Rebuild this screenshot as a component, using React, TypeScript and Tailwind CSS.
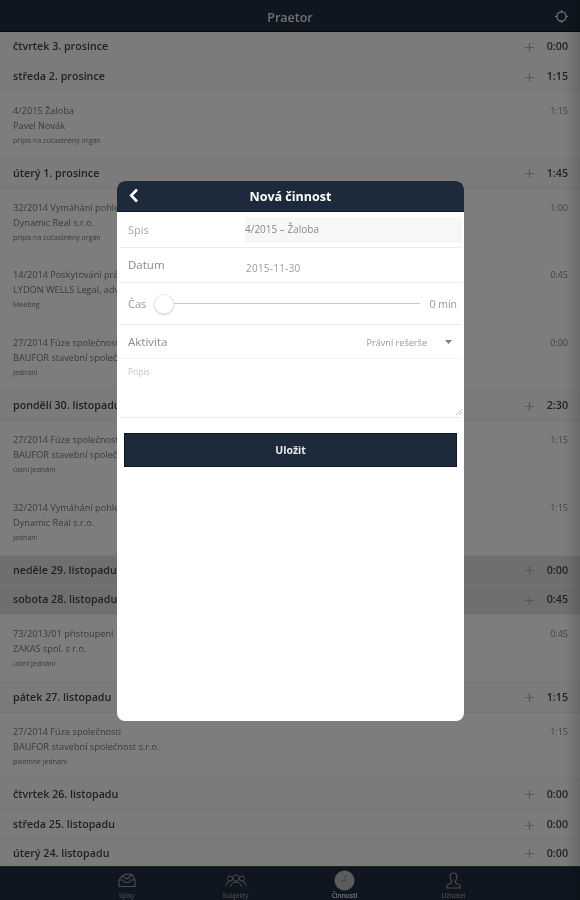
import React from "react";

type Entry = { title: string; client: string; note: string; time: string; h: string };
type Item =
  | { kind: "day"; label: string; time: string; h: string; tone?: string }
  | ({ kind: "entry" } & Entry);

const items: Item[] = [
  { kind: "day", label: "čtvrtek 3. prosince", time: "0:00", h: "h-[30px]" },
  { kind: "day", label: "středa 2. prosince", time: "1:15", h: "h-[30px]" },
  { kind: "entry", title: "4/2015 Žaloba", client: "Pavel Novák", note: "přípis na zúčastněný orgán", time: "1:15", h: "h-[66px]" },
  { kind: "day", label: "úterý 1. prosince", time: "1:45", h: "h-[31px]" },
  { kind: "entry", title: "32/2014 Vymáhání pohledávky", client: "Dynamic Real s.r.o.", note: "přípis na zúčastněný orgán", time: "1:00", h: "h-[67px]" },
  { kind: "entry", title: "14/2014 Poskytování právních služeb", client: "LYDON WELLS Legal, advokátní", note: "Meeting", time: "0:45", h: "h-[68px]" },
  { kind: "entry", title: "27/2014 Fúze společnosti", client: "BAUFOR stavební společnost s.r.o.", note: "Jednání", time: "0:00", h: "h-[67px]" },
  { kind: "day", label: "pondělí 30. listopadu", time: "2:30", h: "h-[30px]" },
  { kind: "entry", title: "27/2014 Fúze společnosti", client: "BAUFOR stavební společnost s.r.o.", note: "ústní jednání", time: "1:15", h: "h-[68px]" },
  { kind: "entry", title: "32/2014 Vymáhání pohledávky", client: "Dynamic Real s.r.o.", note: "Jednání", time: "1:15", h: "h-[67px]" },
  { kind: "day", label: "neděle 29. listopadu", time: "0:00", h: "h-[29px]", tone: "bg-[#dedede]" },
  { kind: "day", label: "sobota 28. listopadu", time: "0:45", h: "h-[30px]", tone: "bg-[#dedede]" },
  { kind: "entry", title: "73/2013/01 přistoupení", client: "ZAKAS spol. s r.o.", note: "ústní jednání", time: "0:45", h: "h-[67px]" },
  { kind: "day", label: "pátek 27. listopadu", time: "1:15", h: "h-[31px]" },
  { kind: "entry", title: "27/2014 Fúze společnosti", client: "BAUFOR stavební společnost s.r.o.", note: "písemné jednání", time: "1:15", h: "h-[66px]" },
  { kind: "day", label: "čtvrtek 26. listopadu", time: "0:00", h: "h-[31px]" },
  { kind: "day", label: "středa 25. listopadu", time: "0:00", h: "h-[30px]" },
  { kind: "day", label: "úterý 24. listopadu", time: "0:00", h: "h-[27px]" },
];

function Plus() {
  return (
    <svg width="9" height="9" viewBox="0 0 9 9" className="mt-[2px] shrink-0">
      <path d="M4.500 0v9M0 4.500h9" stroke="#b0b0b0" strokeWidth="1.2" />
    </svg>
  );
}

function Day({ label, time, h, tone }: { label: string; time: string; h: string; tone?: string }) {
  return (
    <div className={`${h} ${tone ?? "bg-[#f6f6f6]"} flex items-center border-b border-[#ebebeb] pb-[1px] pl-[13px] pr-[12px]`}>
      <span className="flex-1 text-[10.7px] leading-[14px] font-semibold text-[#444]">{label}</span>
      <Plus />
      <span className="ml-[13px] text-right text-[10.7px] leading-[14px] font-semibold text-[#444]">{time}</span>
    </div>
  );
}

function EntryRow({ title, client, note, time, h }: Entry) {
  return (
    <div className={`${h} bg-[#fafafa] flex border-b border-[#f0f0f0] pl-[13px] pr-[12px] pt-[11px]`}>
      <div className="flex-1 flex flex-col">
        <span className="text-[9.2px] leading-[15px] text-[#777]">{title}</span>
        <span className="text-[9.2px] leading-[15px] text-[#777]">{client}</span>
        <span className="text-[7px] leading-[15px] text-[#777]">{note}</span>
      </div>
      <span className="text-[9px] leading-[15px] text-[#888]">{time}</span>
    </div>
  );
}

function Field({ label, h, children, labelClass = "" }: { label: string; h: string; children: React.ReactNode; labelClass?: string }) {
  return (
    <div className={`${h} mx-[2px] flex items-center border-b border-[#ececec] pl-[9px]`}>
      <span className={`w-[117px] shrink-0 leading-[14px] ${labelClass}`}>{label}</span>
      {children}
    </div>
  );
}

function IconInbox() {
  return (
    <svg width="18" height="15" viewBox="0 0 18 15" fill="none" stroke="#94979c" strokeWidth="1.2">
      <path d="M1 7V13.500H17V7" />
      <path d="M1 7H5.500L7 9.500H11L12.500 7H17" />
      <path d="M1 7 4 3 9 6 14 1.500 17 7" />
      <path d="M4 3 8 1 14 1.500" />
    </svg>
  );
}
function IconGroup() {
  return (
    <svg width="22" height="15" viewBox="0 0 22 15" fill="none" stroke="#94979c" strokeWidth="1">
      <circle cx="11" cy="5" r="3.200" />
      <circle cx="5" cy="5.500" r="2.500" />
      <circle cx="17" cy="5.500" r="2.500" />
      <path d="M5.500 14c0-3 2.500-5 5.500-5s5.500 2 5.500 5" />
      <path d="M1 13c0-2.500 1.500-4 3.500-4M21 13c0-2.500-1.500-4-3.500-4" />
    </svg>
  );
}
function IconClock() {
  return (
    <svg width="21" height="21" viewBox="0 0 22 22" fill="none">
      <circle cx="11" cy="11" r="10.500" fill="#b8b8b8" />
      <path d="M12 5v6.500H8" stroke="#7d7d7d" strokeWidth="0.9" />
    </svg>
  );
}
function IconUser() {
  return (
    <svg width="15" height="17" viewBox="0 0 15 17" fill="none" stroke="#94979c" strokeWidth="1.2">
      <path d="M7.500 1C5.300 1 4.100 2.700 4.100 4.800c0 2 .8 3.400 1.500 4.400v1.300L1 13.500V16h13v-2.500l-4.600-3V9.200c.7-1 1.500-2.400 1.500-4.400C10.900 2.700 9.700 1 7.500 1Z" />
    </svg>
  );
}

export default function App() {
  return (
    <div className="relative h-[900px] w-[580px] overflow-hidden bg-[#f4f4f4] font-['Open_Sans',sans-serif] blur-[0.45px]">
      <div className="flex h-full flex-col">
        <header className="relative flex h-[31px] shrink-0 items-center justify-center bg-[#1f2c3f] pt-[4px]">
          <span className="text-[12.5px] leading-[16px] font-semibold text-[#e0e0e0]">Praetor</span>
          <svg width="13" height="13" viewBox="0 0 13 13" fill="none" className="absolute right-[12px] top-[10px]" stroke="#ffffff" strokeWidth="1.1">
            <circle cx="6.500" cy="6.500" r="4.600" />
            <path d="M6.500 0v2M6.500 11v2M0 6.500h2M11 6.500h2" strokeWidth="0.8" />
          </svg>
        </header>
        <main className="min-h-0 flex-1 overflow-hidden border-t border-[#111]">
          {items.map((it, i) =>
            it.kind === "day" ? (
              <Day key={i} label={it.label} time={it.time} h={it.h} tone={it.tone} />
            ) : (
              <EntryRow key={i} {...it} />
            ),
          )}
        </main>
        <nav className="flex h-[34px] shrink-0 justify-center border-t border-[#444] bg-[#1f2c3f]">
          {[
            { label: "Spisy", icon: <IconInbox />, active: false },
            { label: "Subjekty", icon: <IconGroup />, active: false },
            { label: "Činnosti", icon: <IconClock />, active: true },
            { label: "Uživatel", icon: <IconUser />, active: false },
          ].map((t) => (
            <div key={t.label} className="flex w-[109px] flex-col items-center justify-end">
              <div className="flex h-[22px] items-center">{t.icon}</div>
              <span className={`text-[6.5px] leading-[9px] ${t.active ? "font-semibold text-[#e8e8e8]" : "text-[#a8a8a8]"}`}>{t.label}</span>
            </div>
          ))}
        </nav>
      </div>

      <div className="absolute inset-0 bg-black/50" />
      <div className="absolute inset-y-0 right-0 w-[15px] bg-gradient-to-r from-transparent to-black/15" />

      <div className="absolute left-[117px] top-[181px] flex h-[540px] w-[347px] flex-col overflow-hidden rounded-[8px] bg-white">
        <div className="relative flex h-[31px] shrink-0 items-center justify-center border-b border-[#10162a] bg-[#1c2a3c] pt-[2px]">
          <svg width="10" height="15" viewBox="0 0 10 15" fill="none" className="absolute left-[12px] top-[7px]">
            <path d="M8 1.500 2.200 7.500 8 13.500" stroke="#ffffff" strokeWidth="2.600" />
          </svg>
          <span className="text-[12.5px] leading-[16px] font-bold text-white">Nová činnost</span>
        </div>
        <Field label="Spis" h="h-[36px]" labelClass="pt-[1px] text-[11px] text-[#a8a8a8]">
          <span className="flex h-[26px] flex-1 items-center bg-[#f7f7f7] text-[10px] text-[#8a8a8a]">4/2015 – Žaloba</span>
        </Field>
        <Field label="Datum" h="h-[35px]" labelClass="text-[11.5px] text-[#8a8a8a]">
          <span className="pl-[1px] pt-[6px] text-[9.9px] leading-[14px] tracking-[0.3px] text-[#9a9a9a]">2015-11-30</span>
        </Field>
        <div className="mx-[2px] flex h-[42px] items-center border-b border-[#ececec] pl-[9px] pr-[5px]">
          <span className="w-[26px] text-[11px] leading-[14px] text-[#999]">Čas</span>
          <span className="h-[20px] w-[20px] shrink-0 rounded-full border border-[#eaeaea] bg-white shadow-[0_1px_2px_rgba(0,0,0,0.2)]" />
          <span className="h-[1px] flex-1 bg-[#c8c8c8]" />
          <span className="ml-[9px] text-[10.5px] leading-[14px] text-[#999]">0 min</span>
        </div>
        <div className="mx-[2px] flex h-[34px] items-center border-b border-[#f5f5f5] pl-[9px] pr-[10px] pt-[1px]">
          <span className="flex-1 text-[11.500px] leading-[14px] text-[#8a8a8a]">Aktivita</span>
          <span className="pt-[1px] text-[9.100px] leading-[12px] text-[#999]">Právní rešerše</span>
          <svg width="7" height="4" viewBox="0 0 7 4" className="ml-[18px]">
            <path d="M0 0h7L3.500 4Z" fill="#808080" />
          </svg>
        </div>
        <div className="relative mx-[2px] h-[59px] border-b border-[#ececec] pl-[9px] pt-[7px]">
          <span className="block text-[8.5px] leading-[12px] text-[#c4c4c4]">Popis</span>
          <svg width="6" height="6" viewBox="0 0 6 6" className="absolute bottom-[2px] right-[0px]" stroke="#a0a0a0" strokeWidth="0.7">
            <path d="M6 0 0 6M6 3 3 6" />
          </svg>
        </div>
        <div className="px-[7px] pt-[15px]">
          <button className="flex h-[34px] w-full items-center justify-center border border-[#0e1620] bg-[#1c2a3c] pt-[1px] text-[10.5px] font-bold text-[#e8e8e8]">
            Uložit
          </button>
        </div>
      </div>
    </div>
  );
}
